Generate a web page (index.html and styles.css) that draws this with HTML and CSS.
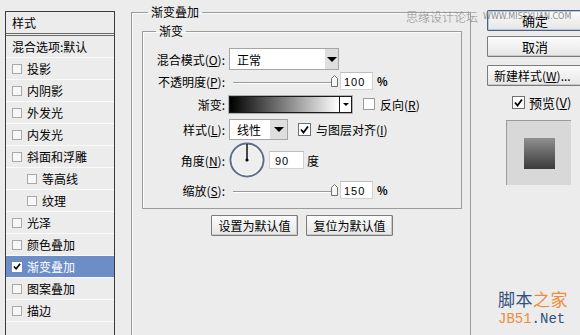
FILE: index.html
```html
<!DOCTYPE html>
<html lang="zh-CN">
<head>
  <meta charset="UTF-8" />
  <title>图层样式 - 渐变叠加</title>
  <link rel="stylesheet" href="styles.css">
</head>
<body>

  <div class="dialog">

    <div class="styles-list">
      <div class="list-head">样式</div>
      <div class="list-row">混合选项:默认</div>
      <div class="list-row"><span class="box"></span>投影</div>
      <div class="list-row"><span class="box"></span>内阴影</div>
      <div class="list-row"><span class="box"></span>外发光</div>
      <div class="list-row"><span class="box"></span>内发光</div>
      <div class="list-row"><span class="box"></span>斜面和浮雕</div>
      <div class="list-row sub"><span class="box"></span>等高线</div>
      <div class="list-row sub"><span class="box"></span>纹理</div>
      <div class="list-row"><span class="box"></span>光泽</div>
      <div class="list-row"><span class="box"></span>颜色叠加</div>
      <div class="list-row selected"><span class="box checked"><svg width="9" height="9" viewBox="0 0 9 9"><path d="M1 4.5 L3.5 7 L8 1.5" fill="none" stroke="#000" stroke-width="1.8"/></svg></span>渐变叠加</div>
      <div class="list-row"><span class="box"></span>图案叠加</div>
      <div class="list-row"><span class="box"></span>描边</div>
      <div class="list-row"></div>
    </div>

    <fieldset class="group outer">
      <legend>渐变叠加</legend>

      <fieldset class="group inner">
        <legend>渐变</legend>

        <div class="form">
          <label>混合模式(<u>O</u>):</label>
          <div class="ctrl">
            <div class="select wide"><span>正常</span><i class="drop"><b class="tri"></b></i></div>
          </div>

          <label>不透明度(<u>P</u>):</label>
          <div class="ctrl">
            <svg class="slider" width="106" height="14" viewBox="0 0 106 14">
              <line x1="0" y1="8.5" x2="100" y2="8.5" stroke="#9a9a9a" />
              <line x1="0" y1="9.5" x2="100" y2="9.5" stroke="#ffffff" />
              <path d="M98.5 4.5 L101.5 1.5 L104.5 4.5 L104.5 12.5 L98.5 12.5 Z" fill="#f6f6f6" stroke="#6f6f6f" />
            </svg>
            <span class="num">100</span>
            <span class="unit">%</span>
          </div>

          <label>渐变:</label>
          <div class="ctrl">
            <div class="gradient"><span class="ramp"></span><i class="drop small"><b class="tri tiny"></b></i></div>
            <span class="check"></span>
            <span class="check-label">反向(<u>R</u>)</span>
          </div>

          <label>样式(<u>L</u>):</label>
          <div class="ctrl">
            <div class="select narrow"><span>线性</span><i class="drop"><b class="tri"></b></i></div>
            <span class="check on"><svg width="11" height="11" viewBox="0 0 11 11"><path d="M2 5.5 L4.5 8.5 L9 2.5" fill="none" stroke="#000" stroke-width="1.8"/></svg></span>
            <span class="check-label">与图层对齐(<u>I</u>)</span>
          </div>

          <label>角度(<u>N</u>):</label>
          <div class="ctrl">
            <svg class="dial" width="36" height="36" viewBox="0 0 36 36">
              <circle cx="18" cy="18" r="16.5" fill="#eeeeee" stroke="#5d6c88" stroke-width="2" />
              <circle cx="18" cy="18" r="15" fill="none" stroke="#ffffff" stroke-width="1" opacity="0.7" />
              <line x1="18" y1="18" x2="18" y2="2" stroke="#000" stroke-width="1.4" />
              <circle cx="18" cy="18" r="1.6" fill="#000" />
            </svg>
            <span class="num angle">90</span>
            <span class="unit">度</span>
          </div>

          <label>缩放(<u>S</u>):</label>
          <div class="ctrl">
            <svg class="slider" width="106" height="14" viewBox="0 0 106 14">
              <line x1="0" y1="8.5" x2="100" y2="8.5" stroke="#9a9a9a" />
              <line x1="0" y1="9.5" x2="100" y2="9.5" stroke="#ffffff" />
              <path d="M98.5 4.5 L101.5 1.5 L104.5 4.5 L104.5 12.5 L98.5 12.5 Z" fill="#f6f6f6" stroke="#6f6f6f" />
            </svg>
            <span class="num">150</span>
            <span class="unit">%</span>
          </div>
        </div>
      </fieldset>

      <div class="defaults">
        <button class="btn">设置为默认值</button>
        <button class="btn">复位为默认值</button>
      </div>
    </fieldset>

    <div class="side">
      <button class="btn primary">确定</button>
      <button class="btn cancel">取消</button>
      <button class="btn new">新建样式(<u>W</u>)...</button>
      <div class="preview-check">
        <span class="check on"><svg width="11" height="11" viewBox="0 0 11 11"><path d="M2 5.5 L4.5 8.5 L9 2.5" fill="none" stroke="#000" stroke-width="1.8"/></svg></span>
        <span>预览(<u>V</u>)</span>
      </div>
      <div class="preview"><span class="swatch"></span></div>
    </div>

  </div>

  <div class="mark-top">
    <span class="mark-cn">思缘设计论坛</span>
    <span class="mark-url">WWW.MISSYUAN.COM</span>
  </div>

  <div class="mark-bottom">
    <div class="mark-name"><span class="blue">脚本</span><span class="orange">之家</span></div>
    <div class="mark-site"><span class="orange">JB51</span><span class="blue">.Net</span></div>
  </div>

</body>
</html>
```

FILE: styles.css
```css
body {
  margin: 0;
  background: #ececec;
  font-family: "Noto Sans CJK SC", "Liberation Sans", sans-serif;
  font-size: 12px;
  color: #000;
  width: 580px;
  height: 335px;
  overflow: hidden;
  position: relative;
}

u {
  text-decoration: underline;
}

.dialog {
  display: flex;
  align-items: flex-start;
  height: 335px;
  overflow: hidden;
}

/* list of styles on the left */
.styles-list {
  box-sizing: border-box;
  flex: none;
  width: 110px;
  height: 340px;
  margin: 11px 0 0 5px;
  border: 1px solid #3c3c3c;
  background: #ececec;
}

.list-head {
  height: 21px;
  line-height: 21px;
  padding-left: 6px;
  border-bottom: 3px double #6a6a6a;
}

.list-row {
  display: flex;
  align-items: center;
  height: 21px;
  padding-left: 6px;
  border-bottom: 1px solid #fbfbfb;
  white-space: nowrap;
}

.list-row.sub {
  padding-left: 21px;
}

.list-row.selected {
  background: #6c8dc6;
  color: #fff;
}

.box {
  box-sizing: border-box;
  width: 10px;
  height: 10px;
  margin-right: 5px;
  border: 1px solid #a9a9a9;
  background: #f7f7f7;
  display: flex;
  align-items: center;
  justify-content: center;
}

.box.checked {
  background: #fff;
  border-color: #fff;
}

/* group boxes */
.group {
  margin: 0;
  border: 1px solid #9b9b9b;
  box-shadow: inset 1px 1px 0 #fafafa;
}

.group legend {
  font-size: 12px;
  line-height: 14px;
  padding: 0 3px;
}

.outer {
  box-sizing: border-box;
  flex: none;
  width: 340px;
  height: 360px;
  margin: 5px 0 0 16px;
  padding: 5px 8px 0 10px;
}

.outer > legend {
  margin-left: 6px;
}

.inner {
  padding: 10px 10px 6px 10px;
}

.inner > legend {
  margin-left: 3px;
}

.form {
  display: grid;
  grid-template-columns: 72px auto;
  grid-template-rows: 22px 22px 24px 26px 36px 24px;
  column-gap: 4px;
  align-items: center;
}

.form label {
  text-align: right;
  white-space: nowrap;
}

.ctrl {
  display: flex;
  align-items: center;
  white-space: nowrap;
}

/* dropdowns */
.select {
  box-sizing: border-box;
  display: flex;
  align-items: stretch;
  background: #fff;
  border: 1px solid #a5a5a5;
}

.select span {
  flex: 1;
  display: flex;
  align-items: center;
  padding-left: 7px;
}

.select.wide {
  width: 110px;
  height: 22px;
}

.select.narrow {
  width: 59px;
  height: 21px;
}

.drop {
  width: 13px;
  background: #dedede;
  display: flex;
  align-items: center;
  justify-content: center;
}

.select.narrow .drop {
  width: 17px;
}

.tri {
  width: 0;
  height: 0;
  border-left: 5px solid transparent;
  border-right: 5px solid transparent;
  border-top: 5px solid #000;
}

.tri.tiny {
  border-left-width: 3px;
  border-right-width: 3px;
  border-top-width: 3px;
}

/* slider + number boxes */
.slider {
  display: block;
  margin-left: 4px;
}

.num {
  box-sizing: border-box;
  width: 33px;
  height: 18px;
  line-height: 18px;
  margin-left: 1px;
  padding-left: 3px;
  background: #fff;
  border: 1px solid #d2d2d2;
  border-top-color: #bdbdbd;
  font-family: "Liberation Sans", sans-serif;
  font-size: 11px;
  letter-spacing: 1px;
}

.num.angle {
  width: 35px;
  margin-left: 4px;
  padding-left: 5px;
}

.unit {
  margin-left: 4px;
  font-weight: bold;
  font-size: 11px;
}

.ctrl .angle + .unit {
  margin-left: 3px;
  font-weight: normal;
  font-size: 12px;
}

/* gradient preview */
.gradient {
  box-sizing: border-box;
  display: flex;
  width: 123px;
  height: 17px;
  border: 1px solid #1a1a1a;
  background: #fff;
  outline: 1px solid #b0b0b0;
}

.ramp {
  flex: 1;
  background: linear-gradient(to right, #000 0%, #fff 100%);
}

.drop.small {
  width: 11px;
  background: #fff;
  border-left: 1px solid #1a1a1a;
}

/* checkboxes */
.check {
  box-sizing: border-box;
  width: 12px;
  height: 12px;
  margin-left: 11px;
  background: #fff;
  border: 1px solid #9c9c9c;
  display: flex;
  align-items: center;
  justify-content: center;
}

.check.on {
  width: 13px;
  height: 13px;
  margin-left: 10px;
  border-color: #707070;
}

.check-label {
  margin-left: 5px;
}

.dial {
  display: block;
}

/* buttons */
.btn {
  box-sizing: border-box;
  height: 21px;
  padding: 0;
  font-family: "Noto Sans CJK SC", "Liberation Sans", sans-serif;
  font-size: 12px;
  color: #000;
  background: linear-gradient(#fbfbfb, #e6e6e6);
  border: 1px solid #7b7b7b;
  border-radius: 1px;
  box-shadow: inset -1px -1px 0 #c9c9c9;
}

.defaults {
  display: flex;
  justify-content: center;
  gap: 8px;
  margin-top: 6px;
}

.defaults .btn {
  width: 87px;
}

.side {
  flex: none;
  display: flex;
  flex-direction: column;
  width: 96px;
  margin: 10px 0 0 16px;
}

.side .btn {
  width: 96px;
  font-size: 13px;
}

.side .primary {
  border-color: #4f5f7c;
  box-shadow: inset 0 0 0 1px #b9c6dc;
}

.side .cancel {
  margin-top: 5px;
}

.side .new {
  margin-top: 8px;
  font-size: 12px;
  text-align: left;
  padding-left: 6px;
}

.preview-check {
  display: flex;
  align-items: center;
  gap: 4px;
  margin-top: 7px;
  padding-left: 15px;
  font-size: 13px;
}

.preview-check .check {
  margin-left: 10px;
}

.preview {
  box-sizing: border-box;
  width: 65px;
  height: 65px;
  margin: 8px 0 0 19px;
  background: #d8d8d8;
  border-top: 1px solid #9a9a9a;
  border-left: 1px solid #9a9a9a;
  display: flex;
  align-items: center;
  justify-content: center;
}

.swatch {
  width: 31px;
  height: 31px;
  background: linear-gradient(#909090, #3a3a3a);
}

/* watermarks lying over the dialog */
.mark-top {
  position: absolute;
  left: 406px;
  top: 8px;
  display: flex;
  align-items: center;
  gap: 5px;
  white-space: nowrap;
  color: #8c8c8c;
  pointer-events: none;
}

.mark-cn {
  font-size: 12px;
  font-weight: 300;
}

.mark-url {
  font-family: "DejaVu Sans", sans-serif;
  font-size: 8px;
}

.mark-bottom {
  position: absolute;
  left: 498px;
  top: 288px;
  pointer-events: none;
}

.mark-name {
  font-size: 17px;
  line-height: 21px;
  letter-spacing: 0.5px;
}

.mark-site {
  font-family: "Liberation Mono", monospace;
  font-size: 14px;
  line-height: 18px;
  margin-top: 1px;
}

.blue {
  color: #2f4f7d;
}

.orange {
  color: #ee8c3a;
}
```
